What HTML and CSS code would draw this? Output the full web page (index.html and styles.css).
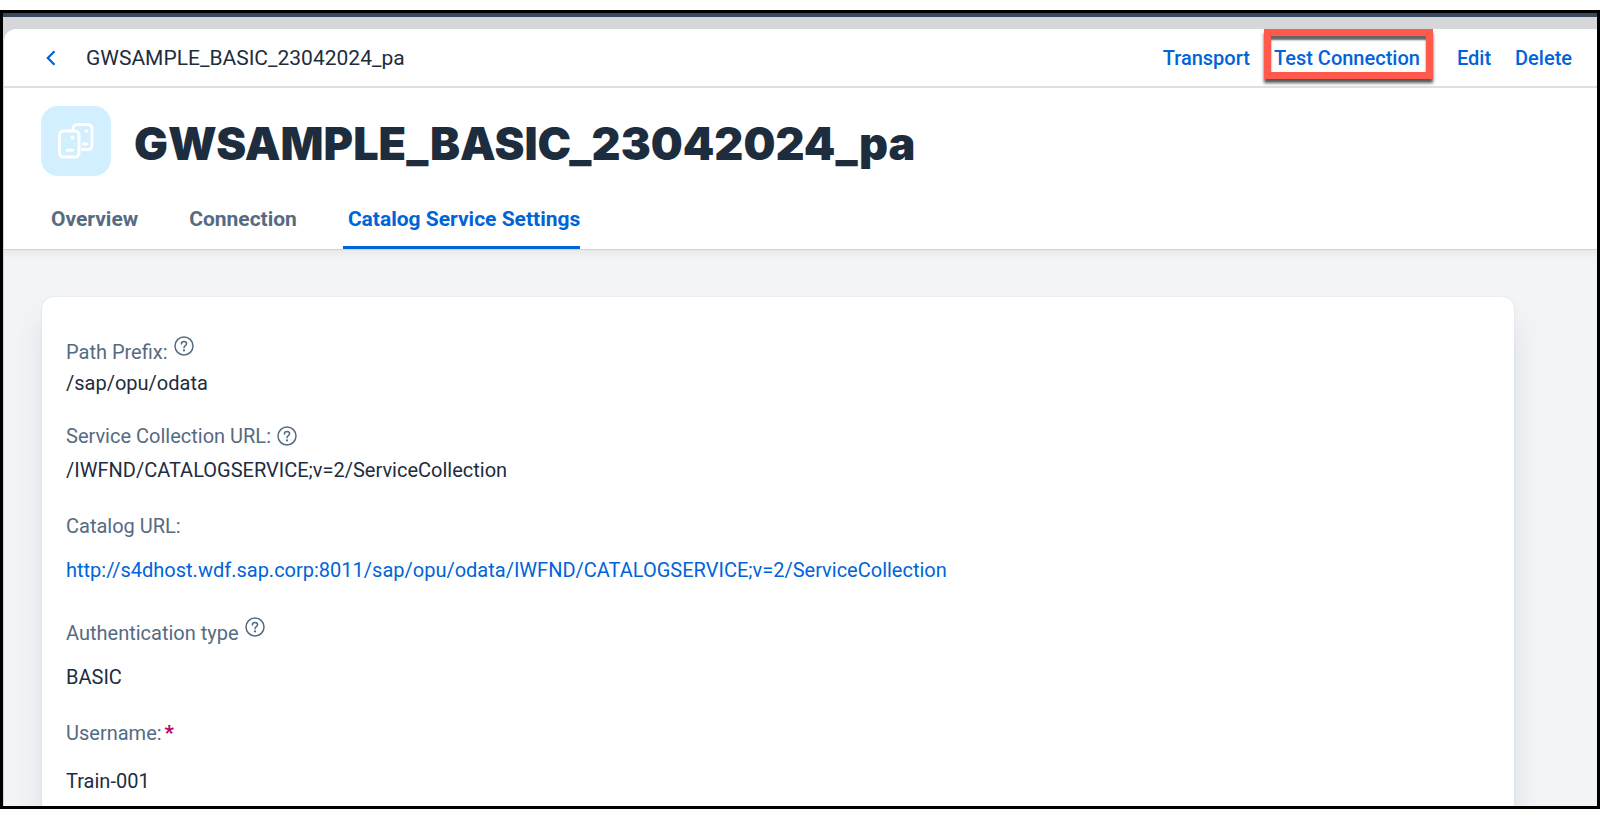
FILE: index.html
```html
<!DOCTYPE html>
<html lang="en">
<head>
<meta charset="utf-8">
<title>GWSAMPLE_BASIC_23042024_pa</title>
<link rel="stylesheet" href="styles.css">
</head>
<body>
<svg class="sprite" aria-hidden="true">
  <symbol id="help" viewBox="0 0 20 20">
    <circle cx="10" cy="10" r="9" fill="none" stroke="currentColor" stroke-width="1.5"/>
    <path d="M7.400 7.900C7.400 6.300 8.500 5.400 10 5.400s2.600 1 2.600 2.400c0 1.900-2.600 1.900-2.600 3.900" fill="none" stroke="currentColor" stroke-width="1.500" stroke-linecap="round"/>
    <circle cx="10" cy="14.400" r="1.100" fill="currentColor"/>
  </symbol>
</svg>
<div class="window">
  <div class="shell"></div>
  <main class="page">
    <header class="toolbar">
      <button class="back" type="button" aria-label="Back">
        <svg width="10" height="16" viewBox="0 0 10 16"><path d="M8.500 1.200 1.800 8l6.700 6.800" fill="none" stroke="currentColor" stroke-width="2.200"/></svg>
      </button>
      <span class="crumb">GWSAMPLE_BASIC_23042024_pa</span>
      <div class="actions">
        <button class="action" type="button">Transport</button>
        <button class="action action-marked" type="button">Test Connection</button>
        <button class="action" type="button">Edit</button>
        <button class="action" type="button">Delete</button>
      </div>
    </header>
    <section class="heading">
      <span class="avatar">
        <svg width="36" height="36" viewBox="0 0 36 36" fill="none" stroke="#fff" stroke-width="3">
          <path d="M15 7V5.500A4 4 0 0 1 19 1.500h11a4 4 0 0 1 4 4v17a4 4 0 0 1-4 4h-7"/>
          <rect x="1.500" y="8" width="19.500" height="26" rx="4"/>
          <path d="M9 27.300h5.500M25.500 20.800h3" stroke-linecap="round"/>
          <g fill="#fff" stroke="none"><circle cx="14.500" cy="14.500" r="1.900"/><circle cx="28.500" cy="8" r="1.800"/></g>
        </svg>
      </span>
      <h1 class="title">GWSAMPLE_BASIC_23042024_pa</h1>
    </section>
    <nav class="tabs">
      <a class="tab" href="#overview">Overview</a>
      <a class="tab" href="#connection">Connection</a>
      <a class="tab tab-active" href="#catalog" aria-current="page">Catalog Service Settings</a>
    </nav>
    <div class="content">
      <dl class="card" id="catalog">
        <div class="field field-tight">
          <dt class="label">Path Prefix: <svg class="help help-high"><use href="#help"/></svg></dt>
          <dd class="value">/sap/opu/odata</dd>
        </div>
        <div class="field field-snug">
          <dt class="label">Service Collection URL: <svg class="help"><use href="#help"/></svg></dt>
          <dd class="value">/IWFND/CATALOGSERVICE;v=2/ServiceCollection</dd>
        </div>
        <div class="field field-link">
          <dt class="label">Catalog URL:</dt>
          <dd class="value"><a class="link" href="#catalog">http://s4dhost.wdf.sap.corp:8011/sap/opu/odata/IWFND/CATALOGSERVICE;v=2/ServiceCollection</a></dd>
        </div>
        <div class="field">
          <dt class="label">Authentication type <svg class="help help-high"><use href="#help"/></svg></dt>
          <dd class="value">BASIC</dd>
        </div>
        <div class="field field-loose">
          <dt class="label label-required">Username:<span class="required">*</span></dt>
          <dd class="value">Train-001</dd>
        </div>
      </dl>
    </div>
  </main>
</div>
</body>
</html>
```
FILE: styles.css
```css
* { box-sizing: border-box; }

body {
  margin: 0;
  padding: 10px 0;
  height: 100vh;
  background: #fff;
  color: #1d2d3e;
  font-family: Roboto, "Liberation Sans", sans-serif;
  font-size: 20px;
  line-height: 24px;
}

.sprite { position: absolute; width: 0; height: 0; }

.window {
  display: flex;
  flex-direction: column;
  height: 100%;
  overflow: hidden;
  border: 3px solid #000;
  background: #d5d7db;
}

.shell { flex: none; height: 4px; margin-bottom: 12px; background: #354a5f; }

.page {
  display: flex;
  flex-direction: column;
  flex: 1;
  min-height: 0;
  margin-left: 1px;
  overflow: hidden;
  border-top-left-radius: 12px;
  background: #fff;
}

.toolbar {
  display: flex;
  align-items: center;
  flex: none;
  height: 59px;
  padding: 0 25px 0 42px;
  border-bottom: 2px solid #dedfe0;
}

.crumb { font-size: 21px; }

button { border: 0; padding: 0; background: none; font: inherit; cursor: pointer; }

.back { display: flex; width: 40px; color: #0064d9; }

.actions { display: flex; gap: 24px; margin-left: auto; }

.action { position: relative; color: #0064d9; font-weight: 500; }

.action-marked { margin-right: 13px; }

/* Highlight frame laid over the button */
.action-marked::after {
  content: "";
  position: absolute;
  inset: -17px -13px -9px -10px;
  border: 7px solid #ff5a4b;
  box-shadow: 0 4px 3px #555, inset 0 4px 2px #666;
}

.heading {
  display: flex;
  align-items: center;
  gap: 23px;
  flex: none;
  padding: 18px 37px 0;
}

.avatar {
  display: grid;
  place-items: center;
  width: 70px;
  height: 70px;
  border-radius: 17px;
  background: #d1efff;
}

.title {
  margin: 0;
  padding-top: 6px;
  font-family: Inter, Roboto, sans-serif;
  font-size: 45px;
  line-height: 56px;
  font-weight: 900;
}

.tabs {
  display: flex;
  gap: 41px;
  flex: none;
  padding: 25px 42px 0;
  border-bottom: 1px solid #d0d2d5;
}

.tab {
  padding: 6px 0 15px 5px;
  margin-right: 5px;
  border-bottom: 3px solid transparent;
  color: #556b82;
  font-size: 21px;
  font-weight: 700;
  text-decoration: none;
}

.tab-active { border-color: #0064d9; color: #0064d9; border-radius: 2px 2px 0 0; }

.content {
  display: flex;
  flex: 1;
  min-height: 0;
  padding: 47px 83px 0 38px;
  background: #f3f4f6;
  box-shadow: inset 0 8px 6px -5px #e4e6e8;
}

.card {
  flex: 1;
  margin: 0;
  padding: 43px 24px 0;
  border-radius: 12px 12px 0 0;
  background: #fff;
  box-shadow: 0 0 2px #d5dae0, 0 24px 28px #d8dee5;
}

.field { display: flex; flex-direction: column; gap: 20px; margin-bottom: 32px; }
.field-tight { gap: 7px; margin-bottom: 29px; }
.field-snug { gap: 10px; margin-bottom: 32px; }
.field-link { margin-bottom: 39px; }
.field-loose { gap: 24px; }

.label { display: flex; align-items: center; gap: 6px; height: 24px; color: #556b82; }
.label-required { gap: 3px; }

.value { margin: 0; color: #1d2d3e; }

.help { width: 20px; height: 20px; }
.help-high { align-self: flex-start; margin-top: -4px; }

.required { color: #ba066c; font-weight: 900; }

.link { color: #0064d9; text-decoration: none; }
```
